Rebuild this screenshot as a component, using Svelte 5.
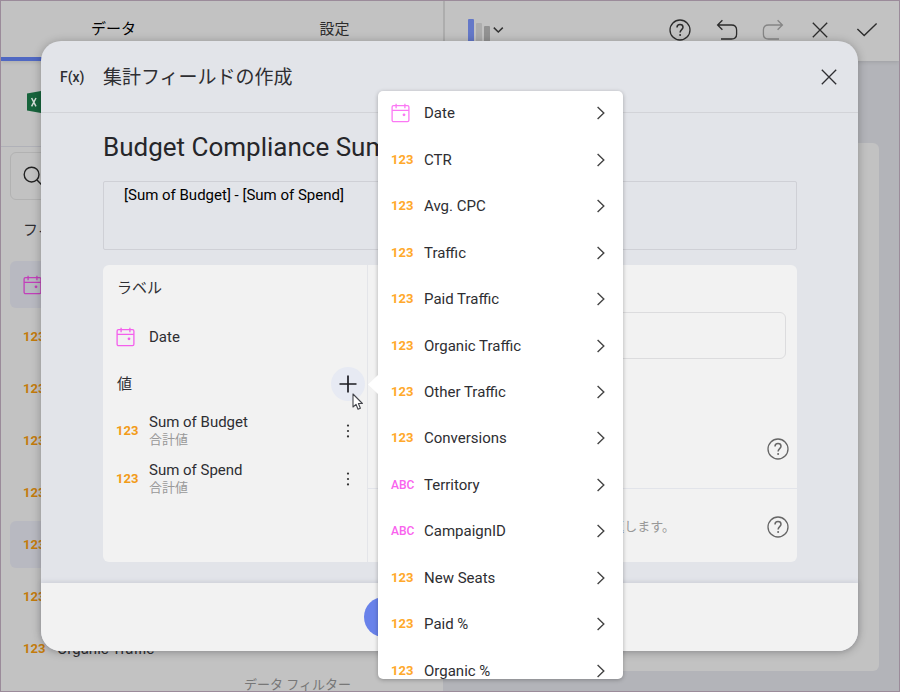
<script>
  const menuItems = [
    { name: 'Date', type: 'date' },
    { name: 'CTR', type: 'num' },
    { name: 'Avg. CPC', type: 'num' },
    { name: 'Traffic', type: 'num' },
    { name: 'Paid Traffic', type: 'num' },
    { name: 'Organic Traffic', type: 'num' },
    { name: 'Other Traffic', type: 'num' },
    { name: 'Conversions', type: 'num' },
    { name: 'Territory', type: 'text' },
    { name: 'CampaignID', type: 'text' },
    { name: 'New Seats', type: 'num' },
    { name: 'Paid %', type: 'num' },
    { name: 'Organic %', type: 'num' }
  ];

  const sideFields = [
    { name: 'Date', type: 'date', selected: true },
    { name: 'CTR', type: 'num' },
    { name: 'Spend', type: 'num' },
    { name: 'Avg. CPC', type: 'num' },
    { name: 'Traffic', type: 'num' },
    { name: 'Budget', type: 'num', selected: true },
    { name: 'Paid Traffic', type: 'num' },
    { name: 'Organic Traffic', type: 'num' }
  ];

  const values = ['Sum of Budget', 'Sum of Spend'];

  let title = $state('Budget Compliance Sum');
  let formula = $state('[Sum of Budget] - [Sum of Spend]');
</script>

{#snippet typeIcon(type)}
  <span class="type {type}">
    {#if type === 'date'}
      <svg width="20" height="20" viewBox="0 0 20 20" fill="none" stroke="currentColor" stroke-width="1.3">
        <rect x="1.1" y="2.6" width="16.8" height="16" rx="1.4" />
        <path d="M1.1 7.4H17.9M5.1 .8V5.2M13.9 .8V5.2" />
        <circle cx="13" cy="11.8" r="1.4" fill="currentColor" stroke="none" />
      </svg>
    {:else}
      {type === 'num' ? '123' : 'ABC'}
    {/if}
  </span>
{/snippet}

{#snippet helpIcon()}
  <svg width="24" height="24" viewBox="0 0 24 24" fill="none" stroke="currentColor" stroke-width="1.3">
    <circle cx="12" cy="12" r="10" />
    <path d="M9 9.6C9 7.6 10.2 6.6 12 6.6S15 7.7 15 9.3C15 11.6 12.1 11.7 12.1 14.4" stroke-width="1.5" />
    <circle cx="12.1" cy="17" r="1" fill="currentColor" stroke="none" />
  </svg>
{/snippet}

{#snippet closeIcon()}
  <svg width="18" height="18" viewBox="0 0 18 18" fill="none" stroke="currentColor" stroke-width="1.3">
    <path d="M1.8 1.8 16.2 16.2M16.2 1.8 1.8 16.2" />
  </svg>
{/snippet}

<div class="app">
  <header class="topbar">
    <nav class="tabs">
      <button class="tab active">データ</button>
      <button class="tab">設定</button>
    </nav>
    <button class="chart-picker" aria-label="Chart type">
      <svg width="38" height="24" viewBox="0 0 38 24">
        <rect x="0" y="0" width="6" height="23" rx="1" fill="#6478c8" />
        <rect x="8" y="4" width="6" height="19" rx="1" fill="#adadad" />
        <rect x="16" y="7" width="6" height="16" rx="1" fill="#929292" />
        <path d="M25.8 8.6 30.3 13 34.8 8.6" fill="none" stroke="#333" stroke-width="1.5" />
      </svg>
    </button>
    <div class="tools">
      <button aria-label="Help">{@render helpIcon()}</button>
      <button aria-label="Undo">
        <svg width="24" height="24" viewBox="0 0 24 24" fill="none" stroke="currentColor" stroke-width="1.3">
          <path d="M7.4 2.2 2.6 7 7.4 11.8M2.6 7H16.4Q21.6 7 21.6 12V16.2Q21.6 21 16.4 21H6" />
        </svg>
      </button>
      <button aria-label="Redo" class="off">
        <svg width="24" height="24" viewBox="0 0 24 24" fill="none" stroke="currentColor" stroke-width="1.3">
          <path d="M16.6 2.2 21.4 7 16.6 11.8M21.4 7H7.6Q2.4 7 2.4 12V16.2Q2.4 21 7.6 21H18" />
        </svg>
      </button>
      <button aria-label="Cancel">{@render closeIcon()}</button>
      <button aria-label="Done">
        <svg width="22" height="16" viewBox="0 0 22 16" fill="none" stroke="currentColor" stroke-width="1.4">
          <path d="M1.4 7 8.2 13.6 20.6 1.4" />
        </svg>
      </button>
    </div>
  </header>

  <div class="workspace">
    <aside class="sidebar">
      <div class="source">
        <svg width="24" height="24" viewBox="0 0 24 24">
          <rect x="11" y="4" width="12" height="17" fill="#d8e2dc" stroke="#17643c" />
          <path d="M0 3.4 14 1V23L0 20.6Z" fill="#17643c" />
          <path d="M4.6 8 9 16.4M9 8 4.6 16.4" stroke="#d5ddd8" stroke-width="1.5" />
        </svg>
      </div>
      <div class="side-cols">
        <div class="fields">
          <button class="search" aria-label="Search">
            <svg width="20" height="20" viewBox="0 0 20 20" fill="none" stroke="#222" stroke-width="1.4">
              <circle cx="8.6" cy="8.6" r="7.4" />
              <path d="M14 14 18.4 18.4" />
            </svg>
          </button>
          <h2>フィールド</h2>
          <ul>
            {#each sideFields as f}
              <li class:selected={f.selected}>{@render typeIcon(f.type)}<span>{f.name}</span></li>
            {/each}
          </ul>
        </div>
        <div class="filters">データ フィルター</div>
      </div>
    </aside>
    <main class="canvas"><div class="card"></div></main>
  </div>

  <section class="dialog" role="dialog" aria-label="集計フィールドの作成">
    <header>
      <span class="fx">F(x)</span>
      <h1>集計フィールドの作成</h1>
      <button class="close" aria-label="Close">{@render closeIcon()}</button>
    </header>
    <div class="body">
      <input class="title" aria-label="Field name" bind:value={title} />
      <textarea class="formula" aria-label="Formula" spellcheck="false" bind:value={formula}></textarea>
      <div class="panel">
        <div class="left">
          <h3>ラベル</h3>
          <div class="entry">{@render typeIcon('date')}<span>Date</span></div>
          <div class="values-head">
            <h3>値</h3>
            <button class="add" aria-label="Add">
              <svg width="18" height="18" viewBox="0 0 18 18" stroke="#1c1c22" stroke-width="1.7">
                <path d="M9 .5V17.5M.5 9H17.5" />
              </svg>
            </button>
          </div>
          {#each values as v}
            <div class="value">
              {@render typeIcon('num')}
              <div class="names"><span>{v}</span><small>合計値</small></div>
              <button class="more" aria-label="More">
                <svg width="4" height="14" viewBox="0 0 4 14" fill="#333">
                  <circle cx="2" cy="1.6" r="1.1" /><circle cx="2" cy="7" r="1.1" /><circle cx="2" cy="12.4" r="1.1" />
                </svg>
              </button>
            </div>
          {/each}
        </div>
        <div class="right">
          <input class="find" aria-label="Search functions" />
          <div class="fn first"><button aria-label="Help">{@render helpIcon()}</button></div>
          <div class="fn second">
            <span class="hint">返します。</span>
            <button aria-label="Help">{@render helpIcon()}</button>
          </div>
        </div>
      </div>
    </div>
    <footer><button class="create" aria-label="Create"></button></footer>
  </section>

  <div class="menu">
    <div class="scroll">
      <ul>
        {#each menuItems as m}
          <li>
            <button>
              {@render typeIcon(m.type)}
              <span class="name">{m.name}</span>
              <svg width="10" height="14" viewBox="0 0 10 14" fill="none" stroke="#444" stroke-width="1.4">
                <path d="M1.6 1 7.8 7 1.6 13" />
              </svg>
            </button>
          </li>
        {/each}
      </ul>
    </div>
  </div>

  <svg class="cursor" width="12" height="18" viewBox="0 0 12 18">
    <path d="M1 1V14L4 11.3 6 16.2 8.4 15.2 6.4 10.5H10.4Z" fill="#fff" stroke="#44464c" stroke-width="1.1" stroke-linejoin="round" />
  </svg>
</div>

<style>
  :global(body) {
    margin: 0;
  }
  .app {
    position: relative;
    box-sizing: border-box;
    height: 100vh;
    display: flex;
    flex-direction: column;
    overflow: hidden;
    border: 1px solid #9b8b9a;
    background: #b3b4b9;
    color: #2e2e32;
    font: 15px/20px Roboto, 'Noto Sans CJK JP', sans-serif;
  }
  .app * {
    box-sizing: border-box;
  }
  button {
    display: flex;
    align-items: center;
    justify-content: center;
    padding: 0;
    border: 0;
    background: none;
    color: inherit;
    font: inherit;
  }
  svg {
    display: block;
    flex: none;
  }
  ul {
    margin: 0;
    padding: 0;
    list-style: none;
  }
  h1,
  h2,
  h3 {
    margin: 0;
    font-weight: 400;
  }

  .type {
    flex: none;
    width: 24px;
    font-size: 13px;
    font-weight: 700;
    color: #f29b18;
  }
  .type.text {
    font-size: 12px;
    font-weight: 500;
    color: #f963ee;
  }
  .type.date {
    color: #f45fec;
  }

  .topbar {
    position: relative;
    display: flex;
    height: 60px;
    flex: none;
    background: #c2c2c2;
    box-shadow: 0 1px 4px rgba(0, 0, 0, 0.12);
    color: #2c2c2c;
  }
  .tabs {
    display: grid;
    grid-template-columns: 1fr 1fr;
    width: 444px;
    border-right: 2px solid #adadad;
  }
  .tab {
    padding-left: 4px;
    border-bottom: 4px solid transparent;
  }
  .tab.active {
    border-bottom-color: #5068c2;
    color: #000;
  }
  .chart-picker {
    margin-left: 23px;
  }
  .tools {
    display: grid;
    grid-template-columns: repeat(5, 1fr);
    width: 233px;
    margin-left: auto;
    margin-right: 9px;
    padding-bottom: 2px;
  }
  .tools .off {
    color: #858585;
  }

  .workspace {
    display: flex;
    flex: 1;
    min-height: 0;
  }
  .sidebar {
    display: flex;
    flex-direction: column;
    width: 442px;
    flex: none;
    background: #c2c2c2;
  }
  .source {
    height: 86px;
    padding: 29px 26px;
    border-bottom: 1px solid #b0b1b8;
  }
  .side-cols {
    display: flex;
    flex: 1;
    min-height: 0;
  }
  .fields {
    width: 172px;
    padding: 5px 0 0 9px;
  }
  .search {
    justify-content: flex-start;
    width: 100%;
    height: 48px;
    padding-left: 12px;
    border: 1px solid #b2b2b2;
    border-radius: 6px;
  }
  .fields h2 {
    margin: 20px 0 21px 13px;
    font-size: 15px;
    line-height: 20px;
  }
  .fields li {
    display: flex;
    align-items: center;
    gap: 10px;
    height: 47px;
    margin-bottom: 5px;
    padding-left: 13px;
    border-radius: 6px;
    white-space: nowrap;
  }
  .fields .selected {
    background: #b8b9c1;
  }
  .fields .type.num {
    color: #c37b0c;
  }
  .fields .type.date {
    color: #c23fba;
  }
  .filters {
    flex: 1;
    align-self: flex-end;
    padding-right: 21px;
    text-align: center;
    font-size: 13px;
    line-height: 12px;
    color: #777;
  }
  .canvas {
    flex: 1;
    padding: 82px 20px 20px;
  }
  .card {
    height: 100%;
    border-radius: 6px;
    background: #c2c2c2;
  }

  .dialog {
    position: absolute;
    inset: 40px 41px 40px 40px;
    display: flex;
    flex-direction: column;
    border-radius: 20px;
    background: #e2e4e9;
    box-shadow: 0 1px 10px rgba(0, 0, 0, 0.28);
  }
  .dialog header {
    display: flex;
    align-items: center;
    height: 72px;
    padding: 0 20px 0 19px;
    border-bottom: 1px solid #d2d3d8;
  }
  .fx {
    width: 43px;
    font-size: 14px;
    font-weight: 500;
  }
  h1 {
    flex: 1;
    padding-top: 2px;
    font-size: 19px;
    line-height: 24px;
  }
  .body {
    flex: 1;
    display: flex;
    flex-direction: column;
    padding: 17px 61px 21px 62px;
  }
  .title {
    height: 34px;
    padding: 0;
    border: 0;
    background: none;
    color: #26262a;
    font: 26px/34px Roboto, 'Noto Sans CJK JP', sans-serif;
  }
  .formula {
    height: 69px;
    margin: 17px 0 15px;
    padding: 3px 20px;
    border: 1px solid #cfd0d6;
    border-radius: 2px;
    resize: none;
    background: none;
    color: #000;
    font: 15px/20px Roboto, 'Noto Sans CJK JP', sans-serif;
  }
  .panel {
    flex: 1;
    display: flex;
    border-radius: 6px;
    background: #f2f2f2;
  }
  .left {
    width: 265px;
    padding: 13px 2px 0 13px;
    border-right: 1px solid #e4e5e9;
  }
  h3 {
    padding-left: 1px;
    font-size: 15px;
    line-height: 20px;
  }
  .entry {
    display: flex;
    align-items: center;
    gap: 9px;
    margin-top: 29px;
  }
  .values-head {
    display: flex;
    align-items: center;
    justify-content: space-between;
    height: 34px;
    margin: 20px 0 10px;
  }
  .add {
    width: 34px;
    height: 34px;
    border-radius: 50%;
    background: #e7eaf3;
  }
  .value {
    display: flex;
    align-items: center;
    gap: 9px;
    height: 40px;
    margin-bottom: 8px;
  }
  .names {
    display: flex;
    flex-direction: column;
    flex: 1;
    padding-bottom: 2px;
  }
  .names small {
    font-size: 13px;
    line-height: 16px;
    color: #999;
  }
  .more {
    width: 34px;
    height: 34px;
  }
  .right {
    flex: 1;
    display: flex;
    flex-direction: column;
  }
  .find {
    height: 47px;
    margin: 47px 11px 0;
    border: 1px solid #dcdcde;
    border-radius: 6px;
    background: none;
    font: inherit;
  }
  .fn {
    display: flex;
    align-items: center;
    justify-content: flex-end;
    padding: 0 7px;
    color: #666;
  }
  .first {
    height: 130px;
    padding-top: 50px;
    border-bottom: 1px solid #e2e4ea;
  }
  .second {
    flex: 1;
    padding-top: 3px;
  }
  .hint {
    margin-right: 91px;
    font-size: 13px;
    color: #999;
  }
  footer {
    display: flex;
    align-items: center;
    justify-content: center;
    height: 68px;
    border-radius: 0 0 20px 20px;
    background: #f2f2f2;
    box-shadow: 0 -1px 5px rgba(60, 60, 90, 0.14);
  }
  .create {
    width: 171px;
    height: 40px;
    border-radius: 20px;
    background: #6982ea;
  }

  .menu {
    position: absolute;
    top: 90px;
    bottom: 12px;
    left: 377px;
    width: 245px;
    border-radius: 5px;
    background: #fff;
    box-shadow: 0 1px 4px rgba(0, 0, 0, 0.28);
  }
  .menu::before {
    content: '';
    position: absolute;
    top: 284px;
    left: -10px;
    width: 10px;
    height: 19px;
    background: #fff;
    clip-path: polygon(0 50%, 100% 0, 100% 100%);
  }
  .scroll {
    height: 100%;
    overflow: hidden;
    border-radius: 5px;
  }
  .menu ul {
    display: grid;
    grid-template-rows: repeat(13, 1fr);
    height: 604px;
    margin-top: -1px;
  }
  .menu button {
    width: 100%;
    height: 100%;
    padding: 0 17px 0 13px;
    gap: 9px;
    text-align: left;
  }
  .menu .type.num {
    color: #ffa92b;
  }
  .menu .type.date {
    color: #fb78f4;
  }
  .name {
    flex: 1;
  }
  .cursor {
    position: absolute;
    left: 351px;
    top: 392px;
  }
</style>
